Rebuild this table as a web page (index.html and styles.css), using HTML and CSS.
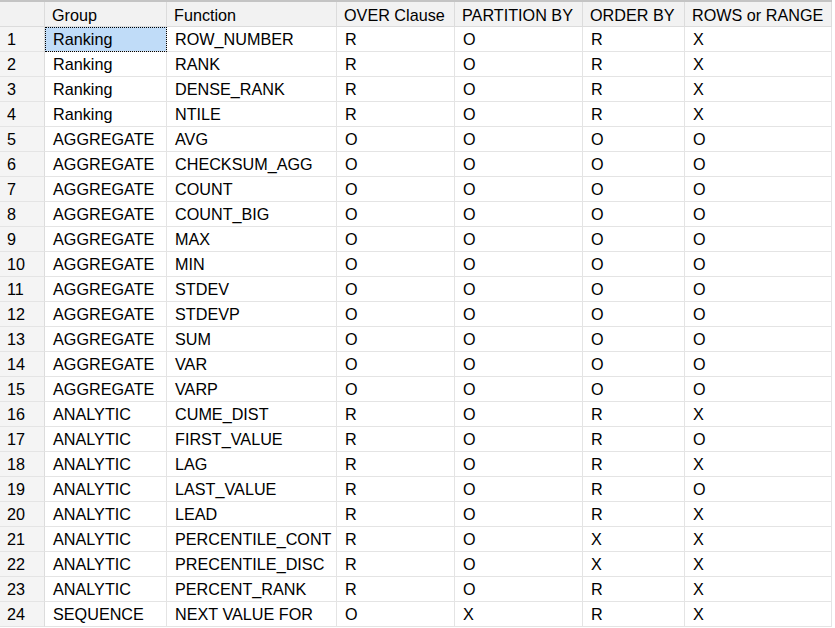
FILE: index.html
```html
<!DOCTYPE html>
<html>
<head>
<meta charset="utf-8">
<link rel="stylesheet" href="styles.css">
</head>
<body>
<div class="topbar"></div>
<table class="grid">
<colgroup>
<col class="c-num"><col class="c-group"><col class="c-func"><col class="c-over"><col class="c-part"><col class="c-order"><col class="c-rows">
</colgroup>
<thead>
<tr><th class="num"></th><th>Group</th><th>Function</th><th>OVER Clause</th><th>PARTITION BY</th><th>ORDER BY</th><th>ROWS or RANGE</th></tr>
</thead>
<tbody>
<tr><td class="num">1</td><td class="sel">Ranking</td><td>ROW_NUMBER</td><td>R</td><td>O</td><td>R</td><td>X</td></tr>
<tr><td class="num">2</td><td>Ranking</td><td>RANK</td><td>R</td><td>O</td><td>R</td><td>X</td></tr>
<tr><td class="num">3</td><td>Ranking</td><td>DENSE_RANK</td><td>R</td><td>O</td><td>R</td><td>X</td></tr>
<tr><td class="num">4</td><td>Ranking</td><td>NTILE</td><td>R</td><td>O</td><td>R</td><td>X</td></tr>
<tr><td class="num">5</td><td>AGGREGATE</td><td>AVG</td><td>O</td><td>O</td><td>O</td><td>O</td></tr>
<tr><td class="num">6</td><td>AGGREGATE</td><td>CHECKSUM_AGG</td><td>O</td><td>O</td><td>O</td><td>O</td></tr>
<tr><td class="num">7</td><td>AGGREGATE</td><td>COUNT</td><td>O</td><td>O</td><td>O</td><td>O</td></tr>
<tr><td class="num">8</td><td>AGGREGATE</td><td>COUNT_BIG</td><td>O</td><td>O</td><td>O</td><td>O</td></tr>
<tr><td class="num">9</td><td>AGGREGATE</td><td>MAX</td><td>O</td><td>O</td><td>O</td><td>O</td></tr>
<tr><td class="num">10</td><td>AGGREGATE</td><td>MIN</td><td>O</td><td>O</td><td>O</td><td>O</td></tr>
<tr><td class="num">11</td><td>AGGREGATE</td><td>STDEV</td><td>O</td><td>O</td><td>O</td><td>O</td></tr>
<tr><td class="num">12</td><td>AGGREGATE</td><td>STDEVP</td><td>O</td><td>O</td><td>O</td><td>O</td></tr>
<tr><td class="num">13</td><td>AGGREGATE</td><td>SUM</td><td>O</td><td>O</td><td>O</td><td>O</td></tr>
<tr><td class="num">14</td><td>AGGREGATE</td><td>VAR</td><td>O</td><td>O</td><td>O</td><td>O</td></tr>
<tr><td class="num">15</td><td>AGGREGATE</td><td>VARP</td><td>O</td><td>O</td><td>O</td><td>O</td></tr>
<tr><td class="num">16</td><td>ANALYTIC</td><td>CUME_DIST</td><td>R</td><td>O</td><td>R</td><td>X</td></tr>
<tr><td class="num">17</td><td>ANALYTIC</td><td>FIRST_VALUE</td><td>R</td><td>O</td><td>R</td><td>O</td></tr>
<tr><td class="num">18</td><td>ANALYTIC</td><td>LAG</td><td>R</td><td>O</td><td>R</td><td>X</td></tr>
<tr><td class="num">19</td><td>ANALYTIC</td><td>LAST_VALUE</td><td>R</td><td>O</td><td>R</td><td>O</td></tr>
<tr><td class="num">20</td><td>ANALYTIC</td><td>LEAD</td><td>R</td><td>O</td><td>R</td><td>X</td></tr>
<tr><td class="num">21</td><td>ANALYTIC</td><td>PERCENTILE_CONT</td><td>R</td><td>O</td><td>X</td><td>X</td></tr>
<tr><td class="num">22</td><td>ANALYTIC</td><td>PRECENTILE_DISC</td><td>R</td><td>O</td><td>X</td><td>X</td></tr>
<tr><td class="num">23</td><td>ANALYTIC</td><td>PERCENT_RANK</td><td>R</td><td>O</td><td>R</td><td>X</td></tr>
<tr><td class="num">24</td><td>SEQUENCE</td><td>NEXT VALUE FOR</td><td>O</td><td>X</td><td>R</td><td>X</td></tr>
</tbody>
</table>
</body>
</html>
```
FILE: styles.css
```css
html, body {
  margin: 0;
  padding: 0;
  background: #ffffff;
}
body {
  font-family: "Liberation Sans", Arial, sans-serif;
  font-size: 16.2px;
  color: #000000;
}
.topbar {
  height: 2px;
  background: #c4c4c4;
  width: 832px;
}
.grid {
  border-collapse: separate;
  border-spacing: 0;
  table-layout: fixed;
  width: 832px;
}
.c-num { width: 45px; }
.c-group { width: 122px; }
.c-func { width: 170px; }
.c-over { width: 118px; }
.c-part { width: 128px; }
.c-order { width: 102px; }
.c-rows { width: 147px; }
.grid th, .grid td {
  box-sizing: border-box;
  height: 25px;
  padding: 0 0 0 8px;
  border-right: 1px solid #e4e4e4;
  border-bottom: 1px solid #e4e4e4;
  text-align: left;
  font-weight: normal;
  white-space: nowrap;
  overflow: hidden;
  vertical-align: middle;
  line-height: 22px;
}
.grid th {
  background: #f2f2f2;
  border-right-color: #dcdcdc;
  border-bottom-color: #dcdcdc;
  padding-left: 7px;
  padding-top: 2px;
}
.grid td.num {
  background: #f4f4f4;
  padding-left: 7px;
  border-right-color: #dcdcdc;
}
.grid td.sel {
  background: #c0dcf8;
  outline: 1px dotted #000000;
  outline-offset: -1px;
}
```
